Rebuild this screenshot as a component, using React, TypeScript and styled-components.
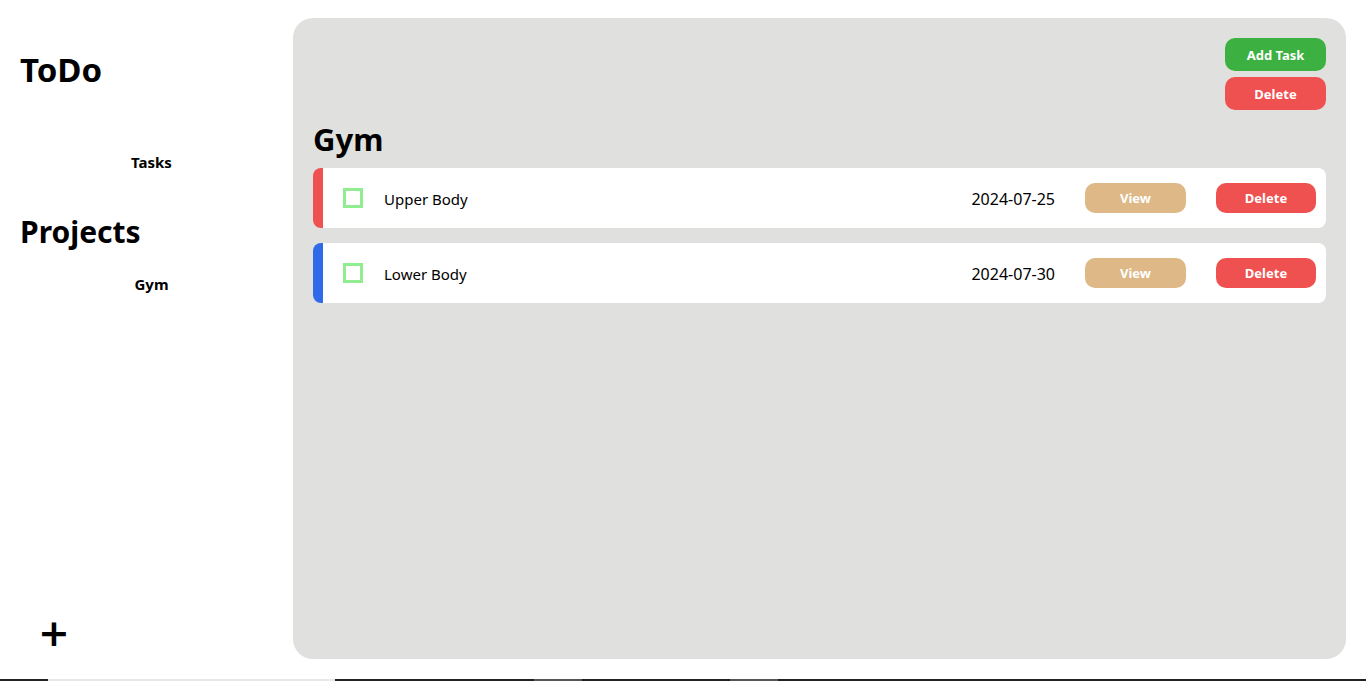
import React from "react";
import styled, { createGlobalStyle } from "styled-components";

const Global = createGlobalStyle`
  html, body { margin: 0; padding: 0; }
  body {
    font-family: "Noto Sans", "Open Sans", sans-serif;
    color: #000;
    background: #fff;
  }
  * { box-sizing: border-box; }
`;

const Page = styled.div`
  display: flex;
  flex-direction: column;
  height: 100vh;
`;

const Body = styled.div`
  flex: 1;
  display: flex;
  min-height: 0;
`;

const Sidebar = styled.aside`
  width: 293px;
  flex-shrink: 0;
  padding: 0 10px 0 20px;
  display: flex;
  flex-direction: column;
`;

const Title = styled.h1<{ $size: number; $top: number }>`
  margin: ${(p) => p.$top}px 0 0;
  font-size: ${(p) => p.$size}px;
  line-height: 1.2;
  font-weight: 700;
`;

const NavItem = styled.div<{ $top: number }>`
  margin-top: ${(p) => p.$top}px;
  text-align: center;
  font-weight: 700;
  font-size: 15px;
  line-height: 20px;
`;

const AddButton = styled.button`
  margin-top: auto;
  margin-bottom: 26px;
  margin-left: 18px;
  align-self: flex-start;
  background: none;
  border: none;
  padding: 0;
  font-family: "DejaVu Sans", sans-serif;
  font-weight: 700;
  font-size: 38px;
  line-height: 40px;
  cursor: pointer;
  color: #000;
`;

const Main = styled.main`
  flex: 1;
  margin: 18px 20px 20px 0;
  background: #e0e1de;
  border-radius: 20px;
  padding: 20px;
  display: flex;
  flex-direction: column;
`;

const Actions = styled.div`
  display: flex;
  flex-direction: column;
  align-items: flex-end;
  gap: 6px;
`;

const Btn = styled.button<{ $bg: string; $w?: number }>`
  width: ${(p) => p.$w ?? 101}px;
  height: 33px;
  border: none;
  border-radius: 10px;
  background: ${(p) => p.$bg};
  color: #fff;
  font-family: "Noto Sans", sans-serif;
  font-weight: 700;
  font-size: 13px;
  cursor: pointer;
  padding: 0;
`;

const ProjectTitle = styled.h1`
  margin: 9px 0 9px;
  font-size: 31px;
  line-height: 40px;
  font-weight: 700;
`;

const List = styled.div`
  display: flex;
  flex-direction: column;
  gap: 15px;
`;

const Row = styled.div<{ $accent: string }>`
  display: flex;
  align-items: center;
  height: 60px;
  background: #fff;
  border-left: 10px solid ${(p) => p.$accent};
  border-radius: 8px;
  padding: 0 10px 0 20px;
`;

const Check = styled.span`
  width: 20px;
  height: 20px;
  border: 3px solid #90ee90;
  flex-shrink: 0;
`;

const TaskName = styled.span`
  flex: 1;
  margin-left: 21px;
  font-size: 15px;
  padding-top: 2px;
`;

const DateText = styled.span`
  font-size: 16px;
  margin-right: 30px;
  padding-top: 2px;
`;

const RowBtn = styled(Btn)`
  height: 30px;
  & + & {
    margin-left: 30px;
  }
`;

const Strip = styled.div`
  height: 2px;
  display: flex;
  background: #222;
`;

const Seg = styled.div<{ $w: number; $c: string }>`
  width: ${(p) => p.$w}px;
  background: ${(p) => p.$c};
`;

const tasks = [
  { name: "Upper Body", date: "2024-07-25", accent: "#ef5050" },
  { name: "Lower Body", date: "2024-07-30", accent: "#2f6be8" },
];

export default function App() {
  return (
    <Page>
      <Global />
      <Body>
        <Sidebar>
          <Title $size={33} $top={50}>ToDo</Title>
          <NavItem $top={62}>Tasks</NavItem>
          <Title $size={30} $top={42}>Projects</Title>
          <NavItem $top={24}>Gym</NavItem>
          <AddButton>+</AddButton>
        </Sidebar>
        <Main>
          <Actions>
            <Btn $bg="#3cb040">Add Task</Btn>
            <Btn $bg="#ef5050">Delete</Btn>
          </Actions>
          <ProjectTitle>Gym</ProjectTitle>
          <List>
            {tasks.map((t) => (
              <Row key={t.name} $accent={t.accent}>
                <Check />
                <TaskName>{t.name}</TaskName>
                <DateText>{t.date}</DateText>
                <RowBtn $bg="#deb887">View</RowBtn>
                <RowBtn $bg="#ef5050" $w={100}>Delete</RowBtn>
              </Row>
            ))}
          </List>
        </Main>
      </Body>
      <Strip>
        <Seg $w={48} $c="#222" />
        <Seg $w={287} $c="#e8e8e8" />
        <Seg $w={199} $c="#222" />
        <Seg $w={48} $c="#555" />
        <Seg $w={148} $c="#222" />
        <Seg $w={48} $c="#555" />
      </Strip>
    </Page>
  );
}
